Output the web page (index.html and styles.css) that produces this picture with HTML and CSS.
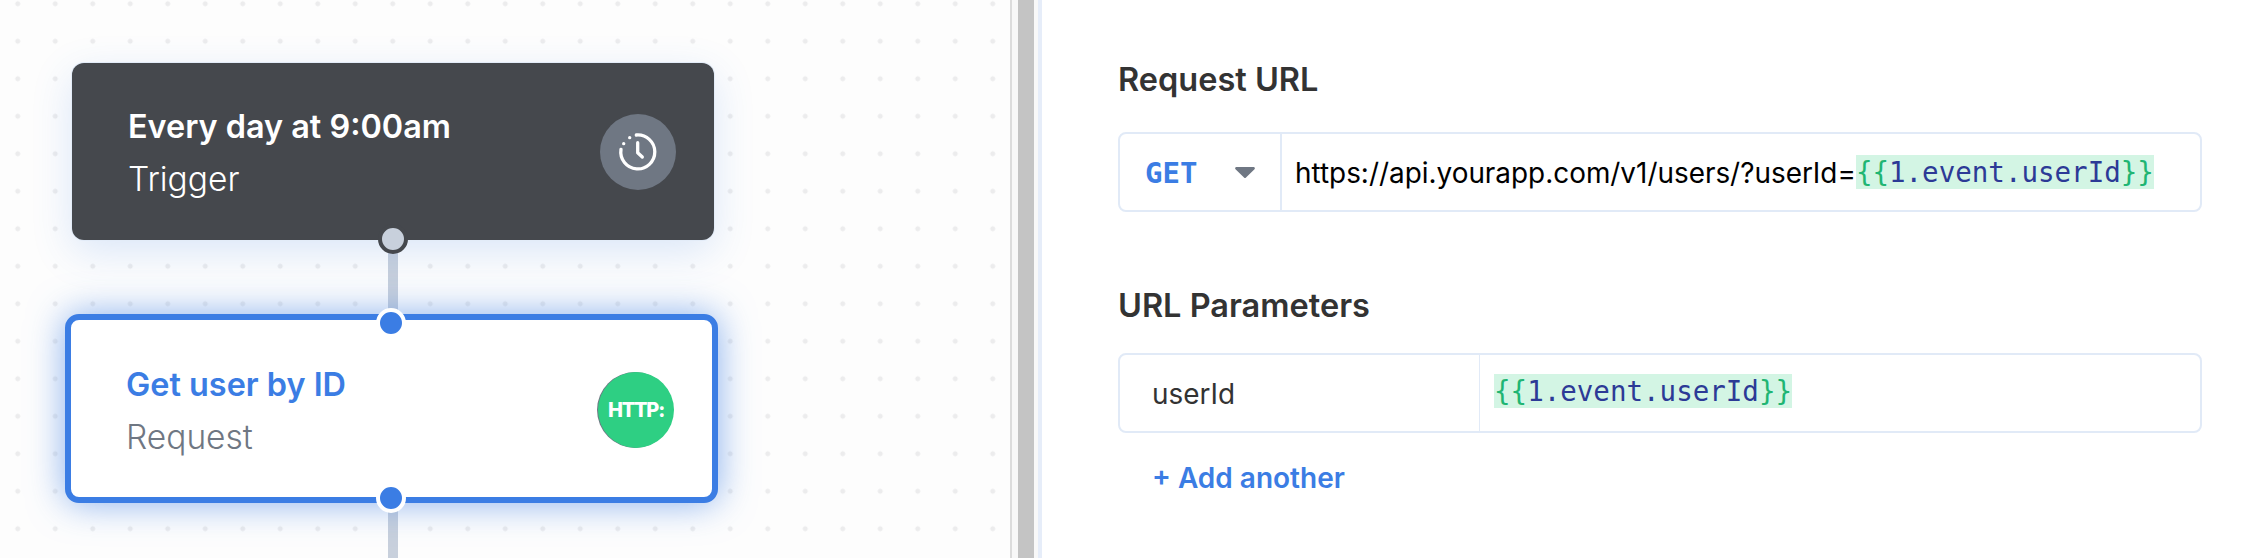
FILE: index.html
```html
<!DOCTYPE html>
<html>
    <head>
        <title>Workflow editor</title>
        <link rel="stylesheet" href="styles.css">
    </head>
    <body>
        <div class="page">
            <div class="canvas">
                <div class="wire wire-top"></div>
                <div class="wire wire-bottom"></div>

                <div class="node node-trigger">
                    <div class="node-text">
                        <div class="node-title">Every day at 9:00am</div>
                        <div class="node-type">Trigger</div>
                    </div>
                    <div class="node-icon icon-clock">
                        <svg width="42" height="42" viewBox="0 0 42 42" fill="none" stroke="#fff" stroke-width="3.3" stroke-linecap="round" stroke-linejoin="round">
                            <path d="M19.3 4A17 17 0 1 1 4 18.300"/>
                            <path d="M6.700 12.700v.01"/>
                            <path d="M12.700 6.700v.01"/>
                            <path d="M20.700 11.700v10l4.600 4.300"/>
                        </svg>
                    </div>
                    <span class="port port-out-dark"></span>
                </div>

                <div class="node node-request">
                    <div class="node-text">
                        <div class="node-title">Get user by ID</div>
                        <div class="node-type">Request</div>
                    </div>
                    <div class="node-icon icon-http">HTTP:</div>
                    <span class="port port-in"></span>
                    <span class="port port-out"></span>
                </div>
            </div>

            <div class="splitter">
                <div class="splitter-bar"></div>
            </div>

            <div class="panel">
                <h2>Request URL</h2>
                <div class="field">
                    <div class="method">
                        <span class="method-name">GET</span>
                        <svg class="caret" width="20" height="11" viewBox="0 0 20 11"><path d="M1.500 0h17a1.300 1.300 0 0 1 1 2.200L11 10.400a1.400 1.400 0 0 1-2 0L.5 2.200A1.300 1.300 0 0 1 1.500 0z" fill="#6f7783"/></svg>
                    </div>
                    <div class="url">https://api.yourapp.com/v1/users/?userId=<span class="token"><b>{{</b>1.event.userId<b>}}</b></span></div>
                </div>

                <h2 class="second">URL Parameters</h2>
                <div class="field">
                    <div class="param-name">userId</div>
                    <div class="param-value"><span class="token"><b>{{</b>1.event.userId<b>}}</b></span></div>
                </div>
                <a class="add-link">+ Add another</a>
            </div>
        </div>
    </body>
</html>
```

FILE: styles.css
```css
* {
    box-sizing: border-box;
}

body {
    margin: 0;
    font-family: Inter, "Liberation Sans", sans-serif;
    background-color: #fff;
}

.page {
    display: flex;
    height: 558px;
    overflow: hidden;
}

/* left side, nodes sit on a free canvas */
.canvas {
    position: relative;
    width: 1010px;
    background-color: #fdfdfd;
    background-image: radial-gradient(circle, #ececed 2.2px, transparent 2.8px);
    background-size: 37.5px 37.5px;
    background-position: -1px -15px;
}

.wire {
    position: absolute;
    left: 388px;
    width: 10px;
    background-color: #c8d0dc;
}

.wire-top {
    top: 240px;
    height: 80px;
}

.wire-bottom {
    top: 500px;
    height: 58px;
}

.node {
    position: absolute;
    display: flex;
    align-items: center;
    justify-content: space-between;
}

.node-trigger {
    left: 72px;
    top: 63px;
    width: 642px;
    height: 177px;
    padding: 0 38px 0 56px;
    border-radius: 12px;
    background-color: #45484d;
    color: #fff;
    box-shadow: 0 0 0 1px #e3ecf8, 0 12px 40px rgba(59, 125, 228, 0.18);
}

.node-request {
    left: 65px;
    top: 314px;
    width: 653px;
    height: 189px;
    padding: 0 38px 0 55px;
    border: 6px solid #3b7de4;
    border-radius: 14px;
    background-color: #fff;
    box-shadow: 0 0 36px rgba(59, 125, 228, 0.6);
}

.node-trigger .node-text {
    margin-top: 2px;
}

.node-request .node-text {
    margin-top: 5px;
}

.node-title {
    font-size: 32.4px;
    font-weight: 600;
    line-height: 40px;
}

.node-type {
    margin-top: 12px;
    font-size: 33.5px;
    font-weight: 300;
    line-height: 40px;
}

.node-request .node-title {
    color: #3b7de4;
}

.node-request .node-type {
    color: #6f7783;
}

.node-icon {
    display: flex;
    align-items: center;
    justify-content: center;
    width: 76px;
    height: 76px;
    border-radius: 50%;
}

.icon-clock {
    background-color: #6f7783;
}

.icon-http {
    margin-top: 3px;
    background-color: #2ecf83;
    box-shadow: -1px 0 0 #6f7783;
    color: #fff;
    font-size: 20px;
    font-weight: 800;
    letter-spacing: -1.2px;
}

.port {
    position: absolute;
    width: 30px;
    height: 30px;
    border-radius: 50%;
    background-color: #3b7de4;
    border: 4px solid #fff;
}

.port-out-dark {
    left: 306px;
    top: 161px;
    background-color: #c8d0dc;
    border-color: #45484d;
}

.port-in {
    left: 305px;
    top: -12px;
}

.port-out {
    left: 305px;
    top: 163px;
}

.splitter {
    width: 32px;
    border-left: 2px solid #dcdcdc;
    border-right: 4px solid #e6edf9;
    background-color: #f8f8f8;
}

.splitter-bar {
    width: 16px;
    height: 100%;
    margin-left: 6px;
    background-color: #c4c4c4;
}

/* right side */
.panel {
    flex: 1;
    padding: 57px 48px 0 76px;
    background-color: #fff;
}

h2 {
    margin: 0 0 30px;
    font-size: 32.5px;
    font-weight: 600;
    line-height: 45px;
    color: #333;
}

h2.second {
    margin-top: 71px;
    margin-bottom: 25px;
}

.field {
    display: flex;
    align-items: center;
    height: 80px;
    border: 2px solid #e1eaf7;
    border-radius: 8px;
    font-size: 27.9px;
}

.method {
    display: flex;
    align-items: center;
    align-self: stretch;
    width: 162px;
    padding-top: 1px;
    padding-left: 25px;
    border-right: 2px solid #e1eaf7;
}

.method-name {
    font-family: "DejaVu Sans Mono", monospace;
    font-size: 29px;
    font-weight: 700;
    color: #3b7de4;
}

.caret {
    margin-left: 38px;
}

.url {
    padding-top: 1px;
    padding-left: 13px;
    color: #000;
    white-space: nowrap;
}

.token {
    display: inline-block;
    height: 34px;
    line-height: 34px;
    background-color: #d3f5e4;
    font-family: "DejaVu Sans Mono", monospace;
    font-size: 27.5px;
    vertical-align: 1px;
    color: #2c3a96;
}

.token b {
    font-weight: 400;
    color: #1fb573;
}

.param-name {
    display: flex;
    align-items: center;
    align-self: stretch;
    width: 360px;
    padding-top: 2px;
    padding-left: 32px;
    border-right: 1px solid #e1eaf7;
    color: #333;
}

.param-value {
    padding-left: 14px;
    padding-bottom: 3px;
}

.add-link {
    display: block;
    margin: 28px 0 0 34px;
    font-size: 28px;
    font-weight: 600;
    line-height: 34px;
    color: #3b7de4;
}
```
